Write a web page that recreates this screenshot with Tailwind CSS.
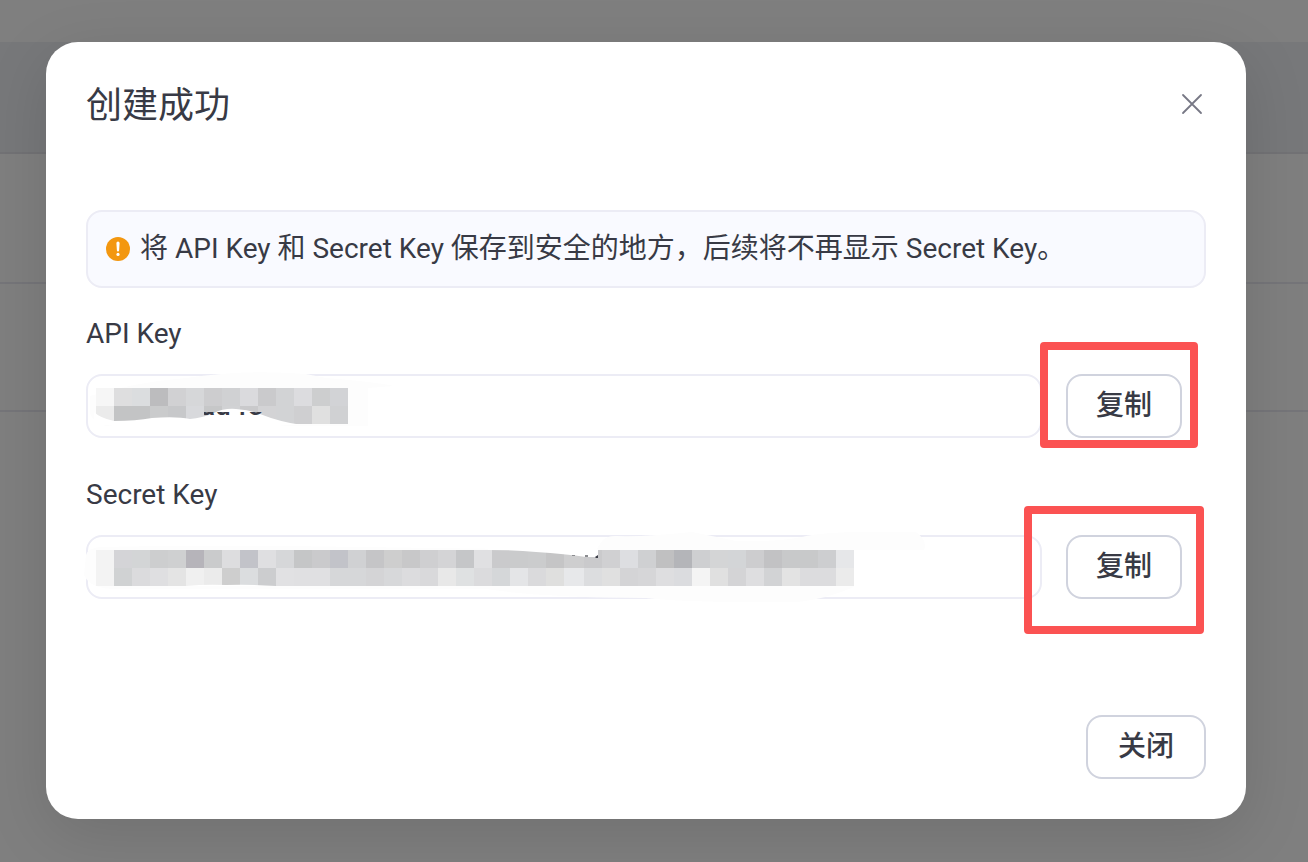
<!DOCTYPE html>
<html lang="zh-CN">
<head>
    <meta charset="UTF-8">
    <meta name="viewport" content="width=device-width, initial-scale=1.0">
    <title>创建成功</title>
    <script src="https://cdn.jsdelivr.net/npm/@tailwindcss/browser@4"></script>
    <style>
        body {
            font-family: Roboto, 'Noto Sans CJK SC', sans-serif;
        }
    </style>
</head>
<body class="relative min-h-screen overflow-x-hidden bg-white text-[#383a45]">
    <!-- page behind the dialog -->
    <div class="absolute inset-0 overflow-hidden" aria-hidden="true">
        <div class="h-[42px]"></div>
        <div class="h-28 border-b-2 border-[#e4e5ea] bg-[#eff1f4]"></div>
        <div class="h-[130px] border-b-2 border-[#ebebf2]"></div>
        <div class="h-32 border-b-2 border-[#ebebf2]"></div>
    </div>

    <div class="relative flex min-h-screen bg-black/50 pt-[42px] pr-[62px] pb-[43px] pl-[46px]">
        <div role="dialog" aria-labelledby="dialog-title" class="flex flex-1 flex-col rounded-[32px] bg-white p-10 shadow-[0_16px_64px_rgba(0,0,0,0.12)]">
            <div class="flex h-11 items-start justify-between">
                <h1 id="dialog-title" class="text-4xl leading-12">创建成功</h1>
                <button type="button" aria-label="关闭对话框" class="dismiss flex h-11 w-7 items-center justify-center">
                    <svg class="size-7" viewBox="0 0 28 28" fill="none" stroke="#777885" stroke-width="1.8" stroke-linecap="round"><path d="M5 5l18 18M23 5L5 23"/></svg>
                </button>
            </div>

            <div class="mt-21 flex h-[78px] items-center gap-2.5 rounded-2xl border-2 border-[#ececf5] bg-[#f9faff] px-[18px]">
                <svg class="size-6 shrink-0" viewBox="0 0 24 24"><circle cx="12" cy="12" r="12" fill="#f39710"/><path d="M10.4 6.2a1.6 1.6 0 0 1 3.2 0l-.5 7.2a1.1 1.1 0 0 1-2.2 0z" fill="#fff"/><circle cx="12" cy="17.4" r="1.6" fill="#fff"/></svg>
                <p class="text-[28px] leading-10">将 API Key 和 Secret Key 保存到安全的地方，后续将不再显示 Secret Key。</p>
            </div>

            <label for="api-key" class="mt-6 text-[28px] leading-11">API Key</label>
            <div class="mt-[18px] flex gap-6 pr-6">
                <div class="relative flex-1">
                    <input id="api-key" type="text" readonly class="h-16 w-full rounded-2xl border-2 border-[#ececf5] px-4 text-[28px]">
                    <svg class="pointer-events-none absolute inset-0 size-full overflow-visible" aria-hidden="true">
                        <path d="M4 22Q50 8 100 4Q160-5 220 0L240 4Q290 8 308 12L282 14V52H200L120 40L20 52Q4 46 4 38z" fill="#fdfdfd"/>
                        <g id="api-mosaic"></g>
                        <path d="M8 38Q14 44 28 47Q50 47 66 44Q90 42 104 45Q116 44 128 39Q138 34 150 35Q164 36 174 40Q194 48 216 51H8z" fill="#fff"/>
                        <clipPath id="sliver"><rect x="118" y="38" width="59" height="4"/></clipPath>
                        <text x="114" y="41" font-size="28" font-weight="500" fill="#383a45" clip-path="url(#sliver)">ad fe</text>
                    </svg>
                </div>
                <div class="relative">
                    <button type="button" data-copy="api-key" class="h-16 w-29 rounded-2xl border-2 border-[#d0d3de] bg-white text-[28px] font-medium">复制</button>
                    <div class="pointer-events-none absolute -top-8 -left-[26px] h-[106px] w-[158px] rounded border-8 border-[#fb5252]"></div>
                </div>
            </div>

            <label for="secret-key" class="mt-[35px] text-[28px] leading-11">Secret Key</label>
            <div class="mt-[18px] flex gap-6 pr-6">
                <div class="relative flex-1">
                    <input id="secret-key" type="text" readonly class="h-16 w-full rounded-2xl border-2 border-[#ececf5] px-4 text-[28px]">
                    <svg class="pointer-events-none absolute inset-0 size-full overflow-visible" aria-hidden="true">
                        <path d="M0 20Q2 13 14 12Q100 10 200 11L510 15L516 6Q520 1 530 1Q560 2 606-3Q626 1 650 6Q690 7 716 2Q736-3 780-3H830Q842 6 838 15H768V52Q740 64 712 67Q600 68 560 63Q450 62 400 54H30Q4 54-2 40z" fill="#fdfdfd"/>
                        <g id="secret-mosaic"></g>
                        <path d="M402 14H512V22H500Q480 19 450 17Q430 15 402 15z" fill="#fff"/>
                        <path d="M100 51Q120 49 140 50Q160 49 190 51z" fill="#fff"/>
                        <path d="M486 20h3v1h-3zM499 20h3v2h-3z" fill="#8b8c90"/>
                        <path d="M509 22l3-2v3h-2z" fill="#383a45"/>
                    </svg>
                </div>
                <div class="relative">
                    <button type="button" data-copy="secret-key" class="h-16 w-29 rounded-2xl border-2 border-[#d0d3de] bg-white text-[28px] font-medium">复制</button>
                    <div class="pointer-events-none absolute -top-[29px] -left-[42px] h-32 w-45 rounded border-8 border-[#fb5252]"></div>
                </div>
            </div>

            <div class="mt-auto flex justify-end pt-16">
                <button type="button" class="dismiss h-16 w-30 rounded-2xl border-2 border-[#d0d3de] bg-white text-[28px] font-medium">关闭</button>
            </div>
        </div>
    </div>

    <script>
        // grey levels of the tiles that cover the keys, one string per row
        const apiTiles = [
            'f6f6f6 dededf dbdddf bcbcbe d1d1d3 d6d7d9 cdcdcf d0d1d3 dadadd cacacc d2d3d5 dcdcdf cdcecf d2d3d6',
            'ebebeb c3c4c5 c3c4c5 cacbcc c7c8ca d8d9dc c6c7c8 d1d2d4 c9c9cb d3d3d5 d2d3d5 cfcfd1 e0e0e0 d0d1d3'
        ];
        const secretTiles = [
            'f3f3f3 d4d4d7 d3d5d6 cdcecf cfd0d1 b6b4ba cacbcc dddddf c2c3c9 dfdfe1 d6d7d9 c5c6c7 cacacc c2c3c9 d0d1d3 c5c5c7 cecece c8c8c9 cfcfd1 d4d4d6 c5c6c8 e0e0e2 cacacc cacbcc cbcccd c5c5c6 cececf cacacc d0d0d2 dddee1 cfd0d2 c0c0c1 b4b5b9 cecfd1 d4d5d6 d3d5d7 cdcdcf c2c2c4 c8c9ca c8c9ca cdced0 e6e7e9',
            'f3f3f3 d0d2d3 dbdbdd dfdfe1 e4e4e4 f0f0f0 ebebeb cecece dbdddf cccdcf e1e1e3 e0e0e2 e0e0e2 d6d7d9 d6d7d9 d4d4d6 d7d8da dcdcde d9d9db e8e8e8 dfe1e2 dbdbdd d5d7d9 e4e5e7 dadadc dfdfde e7e8ea dcdddf e0e0e0 d4d4d6 d6d6d8 dedee0 dbdcdf f4f4f4 e0e0e0 d4d4d6 dedee0 d2d3d5 e3e3e3 dcdcde dcdcde ebebeb'
        ];

        function drawTiles(id, rows, top) {
            const group = document.getElementById(id);
            rows.forEach((row, y) => {
                row.split(' ').forEach((color, x) => {
                    const rect = document.createElementNS('http://www.w3.org/2000/svg', 'rect');
                    // the 27th tile is two pixels wider, the rest shift along
                    rect.setAttribute('x', 10 + x * 18 + (x > 26 ? 2 : 0));
                    rect.setAttribute('y', top + y * 18);
                    rect.setAttribute('width', x === 26 ? 20 : 18);
                    rect.setAttribute('height', 18);
                    rect.setAttribute('fill', '#' + color);
                    group.appendChild(rect);
                });
            });
        }

        drawTiles('api-mosaic', apiTiles, 14);
        drawTiles('secret-mosaic', secretTiles, 15);

        document.querySelectorAll('[data-copy]').forEach(button => {
            button.addEventListener('click', () => {
                navigator.clipboard.writeText(document.getElementById(button.dataset.copy).value);
            });
        });

        document.querySelectorAll('.dismiss').forEach(button => {
            button.addEventListener('click', () => {
                document.querySelector('[role="dialog"]').parentElement.remove();
            });
        });
    </script>
</body>
</html>
